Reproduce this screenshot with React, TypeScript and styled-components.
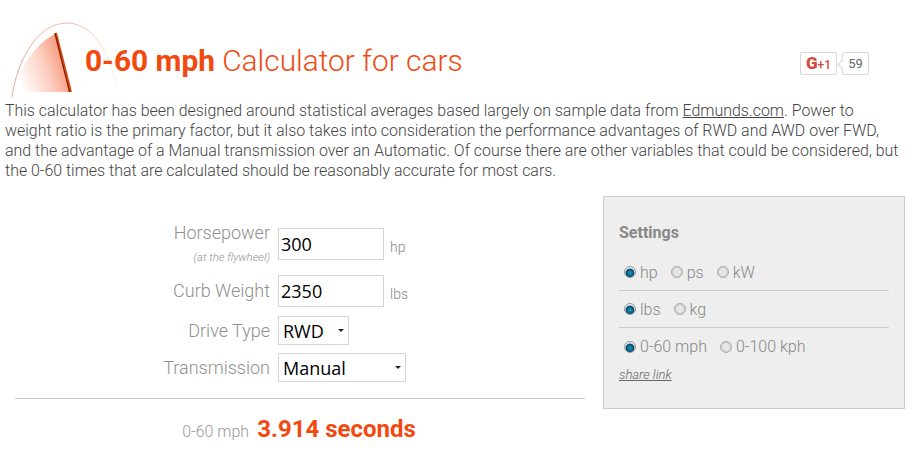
import styled, { createGlobalStyle } from 'styled-components';

const GlobalStyle = createGlobalStyle`
  html, body {
    margin: 0;
    padding: 0;
    background: #fff;
  }
  body {
    font-family: Roboto, "Liberation Sans", sans-serif;
    font-weight: 300;
    color: #444;
  }
`;

const unitGroups = [
  { name: 'power', options: ['hp', 'ps', 'kW'] },
  { name: 'weight', options: ['lbs', 'kg'] },
  { name: 'speed', options: ['0-60 mph', '0-100 kph'] },
];

const Gauge = () => (
  <GaugeSvg width="120" height="90" viewBox="0 0 120 90">
    <defs>
      <linearGradient id="sweep" gradientUnits="userSpaceOnUse" x1="66" y1="50" x2="18" y2="66">
        <stop offset="0" stopColor="#f8977a" />
        <stop offset="0.45" stopColor="#fcd0c2" />
        <stop offset="1" stopColor="#ffffff" />
      </linearGradient>
      <linearGradient id="rim" x1="0" y1="0" x2="1" y2="0">
        <stop offset="0" stopColor="#e9a893" />
        <stop offset="0.6" stopColor="#f1bba9" />
        <stop offset="1" stopColor="#fbeee9" />
      </linearGradient>
    </defs>
    <path d="M12 86 C17 50 37 12 67 12 C92 12 110 40 116 76" fill="none" stroke="url(#rim)" strokeWidth="1" />
    <path d="M55 23 C40 30 22 50 13 81 L70 81 Z" fill="url(#sweep)" />
    <path d="M55.5 22 L70.5 81" stroke="#d8430f" strokeWidth="3" fill="none" />
    <path d="M55 22 L69.5 81" stroke="#6b2208" strokeWidth="1" fill="none" />
  </GaugeSvg>
);

const App = () => {
  return (
    <Page>
      <GlobalStyle />
      <Header>
        <Gauge />
        <Title>
          <strong>0-60 mph</strong> Calculator for cars
        </Title>
        <Social>
          <PlusButton>
            <span>G</span>+1
          </PlusButton>
          <PlusCount>59</PlusCount>
        </Social>
      </Header>
      <Intro>
        This calculator has been designed around statistical averages based largely on sample data from{' '}
        <a href="#edmunds">Edmunds.com</a>. Power to weight ratio is the primary factor, but it also takes into
        consideration the performance advantages of RWD and AWD over FWD, and the advantage of a Manual transmission
        over an Automatic. Of course there are other variables that could be considered, but the 0-60 times that are
        calculated should be reasonably accurate for most cars.
      </Intro>
      <Main>
        <Calculator>
          <Form>
            <StackedLabelBlock>
              <Label>Horsepower</Label>
              <SubLabel>(at the flywheel)</SubLabel>
            </StackedLabelBlock>
            <Field>
              <NumberInput defaultValue="300" />
              <Unit>hp</Unit>
            </Field>
            <LabelBlock>
              <Label>Curb Weight</Label>
            </LabelBlock>
            <Field>
              <NumberInput defaultValue="2350" />
              <Unit>lbs</Unit>
            </Field>
            <SelectLabelBlock>
              <Label>Drive Type</Label>
            </SelectLabelBlock>
            <SelectField>
              <SelectWrap width={71}>
                <select defaultValue="RWD">
                  <option>RWD</option>
                  <option>AWD</option>
                  <option>FWD</option>
                </select>
              </SelectWrap>
            </SelectField>
            <SelectLabelBlock>
              <Label>Transmission</Label>
            </SelectLabelBlock>
            <Field>
              <SelectWrap width={128}>
                <select defaultValue="Manual">
                  <option>Manual</option>
                  <option>Automatic</option>
                </select>
              </SelectWrap>
            </Field>
          </Form>
          <Result>
            <ResultLabel>0-60 mph</ResultLabel>
            <ResultValue>3.914 seconds</ResultValue>
          </Result>
        </Calculator>
        <Settings>
          <SettingsTitle>Settings</SettingsTitle>
          {unitGroups.map((group) => (
            <RadioRow key={group.name}>
              {group.options.map((option, index) => (
                <RadioLabel key={option}>
                  <Radio type="radio" name={group.name} defaultChecked={index === 0} />
                  {option}
                </RadioLabel>
              ))}
            </RadioRow>
          ))}
          <ShareLink href="#share">share link</ShareLink>
        </Settings>
      </Main>
    </Page>
  );
};

export default App;

const Page = styled.div`
  width: 917px;
  height: 460px;
  overflow: hidden;
`;

const Header = styled.header`
  position: relative;
  height: 101px;
  display: flex;
  align-items: flex-start;
  padding: 42px 48px 0 85px;
  box-sizing: border-box;
`;

const GaugeSvg = styled.svg`
  position: absolute;
  left: 0;
  top: 11px;
`;

const Title = styled.h1`
  position: relative;
  flex: 1;
  margin: 0;
  font-size: 29.85px;
  line-height: 38px;
  font-weight: 300;
  color: #f2490f;
  strong {
    font-weight: 700;
  }
`;

const Social = styled.div`
  display: flex;
  gap: 5px;
  margin-top: 10px;
`;

const PlusButton = styled.div`
  width: 37px;
  height: 23px;
  box-sizing: border-box;
  border: 1px solid #d9d9d9;
  border-radius: 2px;
  font-size: 12px;
  font-weight: 500;
  line-height: 21px;
  text-align: center;
  color: #d14b3f;
  span {
    font-size: 17px;
    font-weight: 900;
  }
`;

const PlusCount = styled.div`
  position: relative;
  width: 27px;
  height: 23px;
  box-sizing: border-box;
  border: 1px solid #d9d9d9;
  border-radius: 2px;
  font-size: 13px;
  font-weight: 400;
  line-height: 21px;
  text-align: center;
  color: #666;
  &::before {
    content: '';
    position: absolute;
    left: -4px;
    top: 8px;
    width: 6px;
    height: 6px;
    background: #fff;
    border-left: 1px solid #d9d9d9;
    border-bottom: 1px solid #d9d9d9;
    transform: rotate(45deg);
  }
`;

const Intro = styled.p`
  margin: 0;
  padding: 0 14px 0 5px;
  font-size: 15.95px;
  line-height: 20px;
  color: #444;
  a {
    color: #444;
    text-decoration: underline;
  }
`;

const Main = styled.main`
  display: flex;
  align-items: flex-start;
  padding: 15px 12px 0 15px;
`;

const Calculator = styled.section`
  width: 570px;
`;

const Form = styled.div`
  display: grid;
  grid-template-columns: 255px 1fr;
  column-gap: 8px;
  row-gap: 8px;
  padding-top: 32px;
  padding-bottom: 16px;
  border-bottom: 1px solid #ccc;
`;

const LabelBlock = styled.div`
  align-self: center;
  text-align: right;
`;

const StackedLabelBlock = styled(LabelBlock)`
  align-self: start;
  margin-top: -7px;
`;

const SelectLabelBlock = styled(LabelBlock)`
  margin-top: 1px;
`;

const Label = styled.div`
  font-size: 18px;
  line-height: 24px;
  color: #8f8f8f;
`;

const SubLabel = styled.div`
  margin: 5px 0 1px;
  font-size: 11.3px;
  line-height: 16px;
  font-style: italic;
  color: #8f8f8f;
`;

const Field = styled.div`
  display: flex;
  align-items: flex-start;
  gap: 6px;
`;

const SelectField = styled(Field)`
  margin-top: 1px;
`;

const NumberInput = styled.input`
  width: 106px;
  height: 32px;
  box-sizing: border-box;
  border: 1px solid #d5d5d5;
  padding: 0 2px;
  margin: 0;
  outline: none;
  font-family: "Open Sans", sans-serif;
  font-size: 18px;
  color: #000;
  background: #fff;
`;

const Unit = styled.span`
  font-size: 14px;
  line-height: 20px;
  margin-top: 9px;
  color: #888;
`;

const SelectWrap = styled.div<{ width: number }>`
  position: relative;
  width: ${({ width }) => width}px;
  height: 29px;
  select {
    appearance: none;
    width: 100%;
    height: 100%;
    box-sizing: border-box;
    border: 1px solid #d5d5d5;
    border-radius: 0;
    padding: 0 4px;
    outline: none;
    font-family: "Open Sans", sans-serif;
    font-size: 18px;
    color: #000;
    background: #fff;
  }
  &::after {
    content: '';
    position: absolute;
    right: 5px;
    top: 13px;
    border-left: 3px solid transparent;
    border-right: 3px solid transparent;
    border-top: 3px solid #222;
    pointer-events: none;
  }
`;

const Result = styled.div`
  display: flex;
  justify-content: center;
  align-items: baseline;
  gap: 8px;
  padding: 16px 2px 0 0;
`;

const ResultLabel = styled.span`
  font-size: 16px;
  color: #999;
`;

const ResultValue = styled.span`
  font-size: 24px;
  font-weight: 700;
  color: #f2490f;
`;

const Settings = styled.aside`
  width: 302px;
  height: 213px;
  box-sizing: border-box;
  margin-left: 18px;
  padding: 26px 15px 0;
  background: #eee;
  border: 1px solid #ccc;
`;

const SettingsTitle = styled.div`
  font-size: 16px;
  line-height: 20px;
  font-weight: 700;
  color: #888;
  margin-bottom: 11px;
`;

const RadioRow = styled.div`
  display: flex;
  gap: 13px;
  height: 37px;
  box-sizing: border-box;
  align-items: center;
  padding-left: 5px;
  border-bottom: 1px solid #ccc;
  &:nth-of-type(4) {
    border-bottom: none;
  }
`;

const RadioLabel = styled.label`
  display: flex;
  align-items: center;
  gap: 4px;
  font-size: 16px;
  color: #888;
`;

const Radio = styled.input`
  appearance: none;
  width: 12px;
  height: 12px;
  margin: 0;
  border-radius: 50%;
  border: 1px solid #a8a8a8;
  background: radial-gradient(circle, #e6e6e6 0, #e6e6e6 45%, #d2d2d2 62%, #f2f2f2 100%);
  &:checked {
    border-color: #8d97a3;
    background: radial-gradient(circle at 50% 60%, #1aa0c4 0, #0a6d90 30%, #17435f 52%, #eef1f4 62%, #d3d8de 100%);
  }
`;

const ShareLink = styled.a`
  display: block;
  margin-top: 1px;
  font-size: 13px;
  font-style: italic;
  line-height: 18px;
  color: #666;
  text-decoration: underline;
`;
